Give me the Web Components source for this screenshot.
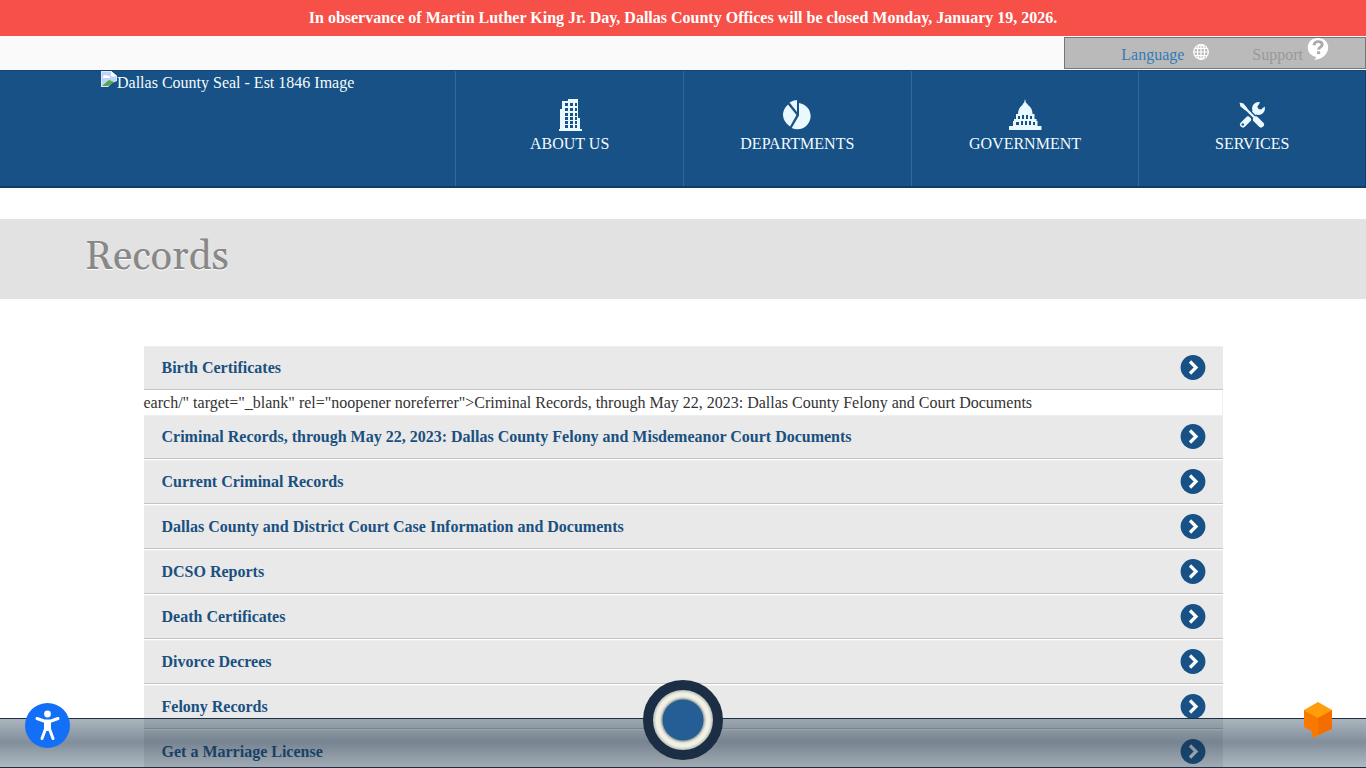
<!DOCTYPE html>
<html lang="en">
<head>
<meta charset="utf-8">
<title>Dallas County - Records</title>
<style>
html, body { margin: 0; height: 100%; }
body { font: 16px/24px "Liberation Serif", serif; color: #333; background: #fff; }
</style>
</head>
<body>
<county-page></county-page>
<script>
const define = (name, html) => customElements.define(name, class extends HTMLElement {
  constructor() {
    super();
    const t = document.createElement('template');
    t.innerHTML = html;
    this.attachShadow({ mode: 'open' }).append(t.content.cloneNode(true));
  }
});

define('alert-banner', `
<style>
:host { display: block; background: #f65049; color: #fff; font-weight: bold; text-align: center; line-height: 20px; padding: 8px 16px; }
</style><slot></slot>`);

define('utility-bar', `
<style>
:host { display: flex; justify-content: flex-end; background: #fafafa; padding: 1px 0; }
nav { box-sizing: border-box; width: 302px; height: 32px; display: flex; justify-content: flex-end; gap: 43px; padding: 0 36px 0 0; background: #bababa; border: 1px solid #777; }
a { display: flex; gap: 9px; text-decoration: none; color: #337ab7; line-height: 34px; }
a.support { color: #999; gap: 4px; }
.globe { margin-top: 6px; }
svg { display: block; }
</style>
<nav aria-label="Utilities">
<a href="#language">Language
<svg class="globe" width="16" height="16" viewBox="0 0 16 16" fill="none" stroke="#fff" stroke-width="1.2"><circle cx="8" cy="8" r="7.3"/><ellipse cx="8" cy="8" rx="3.6" ry="7.3"/><path d="M8 .7v14.6M.7 8h14.6M2 4.3h12M2 11.7h12"/></svg></a>
<a href="#support" class="support">Support
<svg width="22" height="22" viewBox="0 0 22 22"><path fill="#fff" d="M11 0C4.800 0 .8 4 .8 9.500c0 5 3.400 8.600 8.200 9.300 0 1.200-.6 2.300-1.800 3.200C14.500 21.400 21.200 16.500 21.200 9.500 21.200 4 17 0 11 0z"/><path fill="none" stroke="#aaa" stroke-width="2.800" d="M6.900 7.200C7.300 4.700 9 3.700 11.200 3.700c2.300 0 4 1.100 4 3 0 2.500-3.600 2.500-3.600 5"/><path fill="#aaa" d="M10 13.300h3.200v2.800H10z"/></svg></a>
</nav>`);

define('nav-tile', `
<style>
:host { display: block; box-sizing: border-box; border-left: 1px solid #31699c; }
a { display: flex; flex-direction: column; align-items: center; padding-top: 27px; color: #f4fbff; text-decoration: none; text-transform: uppercase; line-height: 24px; }
::slotted(svg) { display: block; width: 34px; height: 34px; }
</style>
<a href="#section"><slot name="icon"></slot><span><slot></slot></span></a>`);

define('site-header', `
<style>
:host { display: grid; grid-template-columns: 2fr 1fr 1fr 1fr 1fr; box-sizing: border-box; min-height: 118px; background: #175185; border-top: 1px solid #114577; border-bottom: 2px solid #0e3d6c; }
.logo { display: flex; align-items: flex-start; color: #f4fbff; text-decoration: none; padding-left: 101px; line-height: 24px; }
.logo svg { flex: none; }
nav-tile:last-child { border-right: 1px solid #0e3d6c; }
</style>
<a class="logo" href="#home"><svg width="16" height="16" viewBox="0 0 16 16"><path fill="#dfe8f6" d="M0 0h10l6 5v5L11 12l-4 4H0z"/><path fill="#bdd3f7" d="M1 1h9v5h5v3L5 15H1z"/><path fill="#fff" d="M2 6c0-2 3-3 4-1 2-1 3 0 3 2H2zM10 0v5h6z"/><path fill="#55a847" d="M1 15l7-6 5 2-6 4z"/></svg><span>Dallas County Seal - Est 1846 Image</span></a>
<nav-tile>About Us<svg slot="icon" viewBox="0 0 34 34"><path fill="#eaf8ff" fill-rule="evenodd" d="M9 3h6V1h10v19h2v11h2v2H6v-2h1V11h2zM12 5v3h3V5zm5 0v3h3V5zm5 0v3h2V5zM12 10v3h3v-3zm5 0v3h3v-3zm5 0v3h2v-3zM12 15v3h3v-3zm5 0v3h3v-3zm5 0v3h2v-3zM12 19v3h3v-3zm5 0v3h3v-3zm5 0v3h2v-3zM12 23v3h3v-3zm5 0v3h3v-3zm5 0v3h2v-3zM12 27v3h3v-3zm5 0v3h3v-3zm5 0v3h2v-3z"/></svg></nav-tile>
<nav-tile>Departments<svg slot="icon" viewBox="0 0 34 34" fill="#eaf8ff"><path d="M19 5a13.200 13.200 0 1 1-7.300 25L19 17.500z"/><path d="M17 2v12L9.500 4.500Q13 2 17 2z"/><path d="M8 6.500L16.500 17 10 28.500C1 22 1 13 8 6.500z"/></svg></nav-tile>
<nav-tile>Government<svg slot="icon" viewBox="0 0 34 34"><path fill="#eaf8ff" d="M16 5l1-4 1 4c1 .4 1.500 1 2 2 3 2 4.500 5 4.500 9h2v5h2v2h1v5h4v4H1v-4h4v-5h1v-2h2v-5h2c0-4 1.500-7 4.500-9 0-1 .5-1.600 1.500-2z"/><path fill="#175185" d="M10 18h2v3h-2zm4-1h2v4h-2zm4 0h2v4h-2zm4 1h2v3h-2zM8 24h3v3H8zm5-1h2v4h-2zm4 0h2v4h-2zm4 0h2v4h-2zm4 1h2v3h-2z"/></svg></nav-tile>
<nav-tile>Services<svg slot="icon" viewBox="0 0 34 34"><circle cx="23.500" cy="10.500" r="6.500" fill="#eaf8ff"/><path fill="#175185" d="M22.500 8.500L26.500 2l5 5-5.500 4.500q-3.500 0-3.500-3z"/><path stroke="#eaf8ff" stroke-width="5" d="M16 18l4-4"/><path stroke="#eaf8ff" stroke-width="6" stroke-linecap="round" d="M8 26.500l5-5"/><path stroke="#175185" stroke-width="5" d="M7 7l14 14"/><path fill="none" stroke="#eaf8ff" stroke-width="2.400" d="M6 6l14 14"/><path fill="#eaf8ff" d="M4.500 4.500l4 1 4 5-2 2-5-4z"/><path stroke="#eaf8ff" stroke-width="6" stroke-linecap="round" d="M21 21.500l5 5"/><circle cx="7.800" cy="26.500" r="1.200" fill="#175185"/></svg></nav-tile>`);

define('page-title', `
<style>
:host { display: block; margin-top: 31px; background: #e2e2e2; }
h1 { box-sizing: border-box; max-width: 1196px; min-height: 80px; margin: 0 auto; font: 40px/44px Georgia, Gelasio, "Liberation Serif", serif; padding: 17px 0 0; color: #888; text-shadow: 0 1px 0 #fff; }
</style><h1><slot></slot></h1>`);

define('record-row', `
<style>
:host { display: block; margin-bottom: 1px; }
h2 { margin: 0; font: inherit; }
button { box-sizing: border-box; width: 100%; min-height: 44px; display: flex; align-items: center; justify-content: space-between; padding: 0 17px 0 18px; border: 0; border-top: 1px solid #efefef; border-bottom: 1px solid #c4c4c4; background: #e9e9e9; color: #1a5080; font: bold 16px/24px "Liberation Serif", serif; text-align: left; cursor: pointer; }
svg { flex: none; }
</style>
<h2><button type="button"><slot></slot><svg width="26" height="26" viewBox="0 0 26 26"><circle cx="13" cy="12.500" r="12.400" fill="#175185"/><path d="M10 6.500l6 6-6 6" fill="none" stroke="#fff" stroke-width="3.200"/></svg></button></h2>`);

define('record-list', `
<style>
:host { display: block; box-sizing: border-box; max-width: 1079px; margin: 47px auto 0; }
p { margin: 0; border-right: 1px solid #eee; line-height: 24px; }
</style>
<record-row>Birth Certificates</record-row>
<p>earch/" target="_blank" rel="noopener noreferrer"&gt;Criminal Records, through May 22, 2023: Dallas County Felony and Court Documents</p>
<record-row>Criminal Records, through May 22, 2023: Dallas County Felony and Misdemeanor Court Documents</record-row>
<record-row>Current Criminal Records</record-row>
<record-row>Dallas County and District Court Case Information and Documents</record-row>
<record-row>DCSO Reports</record-row>
<record-row>Death Certificates</record-row>
<record-row>Divorce Decrees</record-row>
<record-row>Felony Records</record-row>
<record-row>Get a Marriage License</record-row>`);

define('bottom-dock', `
<style>
:host { position: absolute; left: 0; right: 0; bottom: 0; height: 50px; box-sizing: border-box; border-top: 1px solid #1b2e44; border-bottom: 1px solid #1b2e44; background: linear-gradient(rgba(22,50,75,.36), rgba(22,46,70,.54) 48%, rgba(22,50,75,.34)); }
button { position: absolute; padding: 0; border: 0; background: none; cursor: pointer; }
svg { display: block; }
.access { left: 25px; bottom: 19px; }
.menu { left: 50%; bottom: 7px; width: 80px; height: 80px; margin-left: -40px; border-radius: 50%; border: 10px solid #1b2e44; background: radial-gradient(circle, #245e94 20px, #a3aca6 21px, #e8e8dc 23px, #f2f2e6 25px, #eeeee2 27px, #b4bcb6 30px); }
.chat { right: 33px; bottom: 28px; }
</style>
<button class="access" type="button" aria-label="Accessibility"><svg width="45" height="45" viewBox="0 0 45 45"><circle cx="22.500" cy="22.500" r="22.500" fill="#146ff8"/><circle cx="22.500" cy="11" r="3.400" fill="#fff"/><path d="M12 15.500l7 2.500h7l7-2.500M20.500 19v7L17 35.500M24.500 19v7L28 35.500" fill="none" stroke="#fff" stroke-width="3" stroke-linecap="round" stroke-linejoin="round"/><path d="M19 17h7v8l-1 3h-5l-1-3z" fill="#fff"/></svg></button>
<button class="menu" type="button" aria-label="Menu"></button>
<button class="chat" type="button" aria-label="Chat"><svg width="30" height="38" viewBox="0 0 30 38"><path fill="#ff9d0b" d="M15 1l14 8v3L15 18 1 12V9z"/><path fill="#f97800" d="M1 9.500L15 17l14-7.500V28L9 37v-6.500L1 26z"/><path fill="#f46d00" d="M15 17l14-7.500V28L15 34z"/></svg></button>`);

define('county-page', `
<style>
:host { display: block; position: relative; height: 100vh; overflow: hidden; }
.scroll { height: 100%; overflow-y: auto; scrollbar-width: none; }
</style>
<div class="scroll">
<alert-banner role="alert">In observance of Martin Luther King Jr. Day, Dallas County Offices will be closed Monday, January 19, 2026.</alert-banner>
<utility-bar></utility-bar>
<site-header></site-header>
<main><page-title>Records</page-title><record-list></record-list></main>
</div>
<bottom-dock></bottom-dock>`);
</script>
</body>
</html>
